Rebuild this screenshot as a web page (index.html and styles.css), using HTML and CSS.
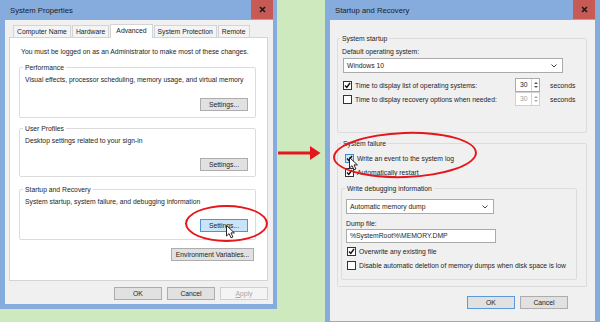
FILE: index.html
```html
<!DOCTYPE html>
<html lang="en">
<head>
  <meta charset="UTF-8">
  <meta name="viewport" content="width=device-width, initial-scale=1.0">
  <title>System Properties - Startup and Recovery</title>
  <link rel="stylesheet" href="styles.css">
</head>
<body>

  <div class="desk">

    <!-- System Properties dialog -->
    <div class="win win-left">
      <div class="titlebar">
        <span class="title">System Properties</span>
        <span class="close">
          <svg width="7" height="7" viewBox="0 0 7 7"><path d="M1 1L6 6M6 1L1 6" stroke="#1c1c1c" stroke-width="1.7"/></svg>
        </span>
      </div>
      <div class="client">
        <div class="tabs">
          <span class="tab">Computer Name</span>
          <span class="tab">Hardware</span>
          <span class="tab active">Advanced</span>
          <span class="tab">System Protection</span>
          <span class="tab">Remote</span>
        </div>
        <div class="panel">
          <p class="notice">You must be logged on as an Administrator to make most of these changes.</p>

          <div class="group g-perf">
            <div class="group-title">Performance</div>
            <p class="desc">Visual effects, processor scheduling, memory usage, and virtual memory</p>
            <button class="btn">Settings...</button>
          </div>

          <div class="group g-prof">
            <div class="group-title">User Profiles</div>
            <p class="desc">Desktop settings related to your sign-in</p>
            <button class="btn">Settings...</button>
          </div>

          <div class="group g-start">
            <div class="group-title">Startup and Recovery</div>
            <p class="desc">System startup, system failure, and debugging information</p>
            <button class="btn btn-hot">Settings...</button>
          </div>

          <button class="btn btn-env">Environment Variables...</button>
        </div>
        <div class="footer">
          <button class="btn">OK</button>
          <button class="btn">Cancel</button>
          <button class="btn" disabled><u>A</u>pply</button>
        </div>
      </div>
      <div class="ring ring-left"></div>
      <svg class="cursor cursor-left" width="10" height="14" viewBox="0 0 10 14"><path d="M0.5 0.5V11L3 8.6L5 12.8L6.9 12L5 7.9H8.4Z" fill="#fff" stroke="#111" stroke-width="0.9" stroke-linejoin="round"/></svg>
    </div>

    <div class="arrow-col">
      <svg width="43" height="14" viewBox="0 0 43 14"><rect x="0" y="5.5" width="34" height="3" fill="#e5161c"/><path d="M32 0L42.5 7L32 14Z" fill="#e5161c"/></svg>
    </div>

    <!-- Startup and Recovery dialog -->
    <div class="win win-right">
      <div class="titlebar">
        <span class="title">Startup and Recovery</span>
        <span class="close">
          <svg width="7" height="7" viewBox="0 0 7 7"><path d="M1 1L6 6M6 1L1 6" stroke="#1c1c1c" stroke-width="1.7"/></svg>
        </span>
      </div>
      <div class="client">
        <div class="group r-startup">
          <div class="group-title">System startup</div>
          <div class="label">Default operating system:</div>
          <div class="select sel-os">
            <span>Windows 10</span>
            <svg width="6" height="4" viewBox="0 0 6 4"><path d="M0.5 0.5L3 3L5.5 0.5" fill="none" stroke="#444" stroke-width="1"/></svg>
          </div>
          <div class="time-row row-first">
            <label class="check"><span class="cb on"><svg width="7" height="7" viewBox="0 0 7 7"><path d="M1 3.6L2.8 5.5L6 1" fill="none" stroke="#111" stroke-width="1.4"/></svg></span>Time to display list of operating systems:</label>
            <div class="spin">
              <span class="spin-val">30</span>
              <span class="spin-btns"><i class="up"></i><i class="down"></i></span>
            </div>
            <span>seconds</span>
          </div>
          <div class="time-row">
            <label class="check"><span class="cb"></span>Time to display recovery options when needed:</label>
            <div class="spin off">
              <span class="spin-val">30</span>
              <span class="spin-btns"><i class="up"></i><i class="down"></i></span>
            </div>
            <span>seconds</span>
          </div>
        </div>

        <div class="group r-failure">
          <div class="group-title">System failure</div>
          <label class="check row-log"><span class="cb on hot"><svg width="7" height="7" viewBox="0 0 7 7"><path d="M1 3.6L2.8 5.5L6 1" fill="none" stroke="#111" stroke-width="1.4"/></svg></span>Write an event to the system log</label>
          <label class="check row-restart"><span class="cb on"><svg width="7" height="7" viewBox="0 0 7 7"><path d="M1 3.6L2.8 5.5L6 1" fill="none" stroke="#111" stroke-width="1.4"/></svg></span>Automatically restart</label>

          <div class="group r-debug">
            <div class="group-title">Write debugging information</div>
            <div class="select sel-dump">
              <span>Automatic memory dump</span>
              <svg width="6" height="4" viewBox="0 0 6 4"><path d="M0.5 0.5L3 3L5.5 0.5" fill="none" stroke="#444" stroke-width="1"/></svg>
            </div>
            <div class="label dump-label">Dump file:</div>
            <div class="field">%SystemRoot%\MEMORY.DMP</div>
            <label class="check row-over"><span class="cb on"><svg width="7" height="7" viewBox="0 0 7 7"><path d="M1 3.6L2.8 5.5L6 1" fill="none" stroke="#111" stroke-width="1.4"/></svg></span>Overwrite any existing file</label>
            <label class="check row-keep"><span class="cb"></span>Disable automatic deletion of memory dumps when disk space is low</label>
          </div>
        </div>

        <div class="footer">
          <button class="btn btn-default">OK</button>
          <button class="btn">Cancel</button>
        </div>
      </div>
      <div class="ring ring-right"></div>
      <svg class="cursor cursor-right" width="10" height="14" viewBox="0 0 10 14"><path d="M0.5 0.5V11L3 8.6L5 12.8L6.9 12L5 7.9H8.4Z" fill="#fff" stroke="#111" stroke-width="0.9" stroke-linejoin="round"/></svg>
    </div>

  </div>

</body>
</html>
```

FILE: styles.css
```css
* {
  box-sizing: border-box;
}

body {
  margin: 0;
  background: #cfe9bf;
  font-family: 'Liberation Sans', Arial, sans-serif;
  font-size: 6.8px;
  color: #1e1e1e;
  overflow: hidden;
}

.desk {
  display: flex;
  align-items: flex-start;
  height: 322px;
}

/* window frame */
.win {
  position: relative;
  display: flex;
  flex-direction: column;
  background: #85acdd;
}

.win-left {
  width: 277px;
  height: 309px;
  padding: 0 4px 5px 5px;
}

.win-right {
  width: 275px;
  height: 326px;
  padding: 0 5px 5px 5px;
}

.titlebar {
  height: 20px;
  display: flex;
  align-items: center;
  justify-content: space-between;
}

.title {
  padding-left: 5px;
  font-size: 7.7px;
  color: #1b1b1b;
}

.close {
  align-self: flex-start;
  width: 22px;
  height: 19px;
  background: #c85a55;
  display: flex;
  align-items: center;
  justify-content: center;
}

.client {
  flex: 1;
  background: #f0f0f0;
  display: flex;
  flex-direction: column;
}

.win-left .client {
  padding: 4px 5px 0 4px;
}

.win-right .client {
  padding: 18px 8px 0 7px;
}

/* tabs */
.tabs {
  display: flex;
  align-items: flex-end;
  height: 13px;
  padding-left: 4px;
  gap: 1px;
  position: relative;
  z-index: 1;
}

.tab {
  height: 12px;
  line-height: 11px;
  padding: 0 3px;
  border: 1px solid #d4d4d4;
  border-bottom: none;
  background: #f4f4f4;
  white-space: nowrap;
}

.tab.active {
  height: 14px;
  margin: 0 0 -1px;
  padding: 0 5px;
  line-height: 12px;
  background: #fff;
}

.panel {
  height: 244px;
  background: #fff;
  border: 1px solid #d4d4d4;
  padding: 9px 11px 0 9px;
  display: flex;
  flex-direction: column;
}

.notice {
  margin: 0 0 0 2px;
  line-height: 10px;
  white-space: nowrap;
}

/* group boxes */
.group {
  border: 1px solid #dcdcdc;
  border-radius: 2px;
  display: flex;
  flex-direction: column;
  padding: 0 7px 6px 5px;
}

.group-title {
  align-self: flex-start;
  margin: -5px 0 0 -2px;
  padding: 0 2px;
  line-height: 9px;
  background: #fff;
}

.desc {
  margin: 3px 0 0;
  line-height: 10px;
  white-space: nowrap;
}

.group .btn {
  margin-top: auto;
  align-self: flex-end;
}

.g-perf {
  height: 51px;
  margin-top: 10px;
}

.g-prof {
  height: 49px;
  margin-top: 10px;
  padding-bottom: 5px;
}

.g-start {
  height: 51px;
  margin-top: 12px;
  padding-bottom: 7px;
}

/* buttons */
.btn {
  font: inherit;
  width: 48px;
  height: 13px;
  padding: 0;
  line-height: 11px;
  color: #1e1e1e;
  background: #e1e1e1;
  border: 1px solid #adadad;
}

.btn:disabled {
  color: #a8a8a8;
  background: #f4f4f4;
  border-color: #cfcfcf;
}

.btn u {
  text-decoration: underline;
}

.btn-hot {
  background: #c9e3f8;
  border-color: #4d95d6;
}

.btn-default {
  border-color: #5a9ad6;
}

.btn-env {
  width: 83px;
  align-self: flex-end;
  margin: 8px 2px 0 0;
}

.footer {
  display: flex;
  justify-content: flex-end;
  gap: 5px;
  padding-top: 6px;
}

.win-right .footer {
  padding-top: 9px;
  padding-right: 19px;
}

/* startup and recovery */
.win-right .group,
.win-right .group-title {
  background: #f0f0f0;
}

.r-startup {
  height: 95px;
  padding: 0 5px 0 4px;
}

.label {
  line-height: 10px;
  margin-top: 4px;
}

.select {
  display: flex;
  justify-content: space-between;
  align-items: center;
  height: 15px;
  margin: 1px 0 0 1px;
  padding: 0 5px 0 3px;
  background: #fff;
  border: 1px solid #ababab;
}

.sel-os {
  width: 220px;
}

.sel-dump {
  width: 148px;
  margin: 6px 0 0 0;
}

.time-row {
  display: grid;
  grid-template-columns: 162px 25px auto;
  column-gap: 10px;
  align-items: center;
  height: 13px;
  margin-left: 1px;
}

.row-first {
  height: 14px;
  margin-top: 5px;
}

.check {
  display: flex;
  align-items: center;
  gap: 3px;
  height: 10px;
  white-space: nowrap;
}

.cb {
  width: 9px;
  height: 9px;
  flex: none;
  display: flex;
  align-items: center;
  justify-content: center;
  background: #fff;
  border: 1px solid #333;
}

.cb.hot {
  background: #cfe6f9;
  border-color: #3d8ad0;
}

.spin {
  display: flex;
  height: 14px;
  background: #fff;
  border: 1px solid #ababab;
}

.spin-val {
  flex: 1;
  padding-left: 4px;
  line-height: 12px;
}

.spin-btns {
  width: 8px;
  display: flex;
  flex-direction: column;
  justify-content: space-evenly;
  align-items: center;
  border-left: 1px solid #d6d6d6;
}

.spin-btns i {
  width: 0;
  height: 0;
  border-left: 2px solid transparent;
  border-right: 2px solid transparent;
}

.spin-btns .up {
  border-bottom: 2px solid #555;
}

.spin-btns .down {
  border-top: 2px solid #555;
}

.spin.off {
  border-color: #d0d0d0;
  color: #a0a0a0;
}

.spin.off .spin-btns i {
  border-bottom-color: #aaa;
  border-top-color: #aaa;
}

.r-failure {
  height: 144px;
  margin-top: 10px;
  padding: 0 9px 0 7px;
}

.r-failure > .group-title {
  margin-left: -4px;
}

.row-log {
  margin-top: 5px;
}

.row-restart {
  margin-top: 4px;
}

.r-debug {
  height: 92px;
  margin: 11px 0 0 -4px;
  padding: 0 5px 0 4px;
}

.r-debug .group-title {
  margin-left: -1px;
}

.dump-label {
  margin-top: 5px;
}

.field {
  width: 150px;
  height: 14px;
  line-height: 12px;
  padding-left: 3px;
  background: #fff;
  border: 1px solid #ababab;
}

.row-over {
  margin: 3px 0 0 1px;
}

.row-keep {
  margin: 4px 0 0 1px;
}

/* annotations */
.ring {
  position: absolute;
  border: 2.5px solid #e5161c;
  border-radius: 50%;
}

.ring-left {
  left: 185px;
  top: 205px;
  width: 83px;
  height: 37px;
}

.ring-right {
  left: 8px;
  top: 132px;
  width: 144px;
  height: 46px;
  transform: rotate(-2deg);
}

.cursor {
  position: absolute;
}

.cursor-left {
  left: 226px;
  top: 225px;
}

.cursor-right {
  left: 24px;
  top: 157px;
}

.arrow-col {
  width: 48px;
  padding: 146px 0 0 1px;
}

.arrow-col svg {
  display: block;
}
```
